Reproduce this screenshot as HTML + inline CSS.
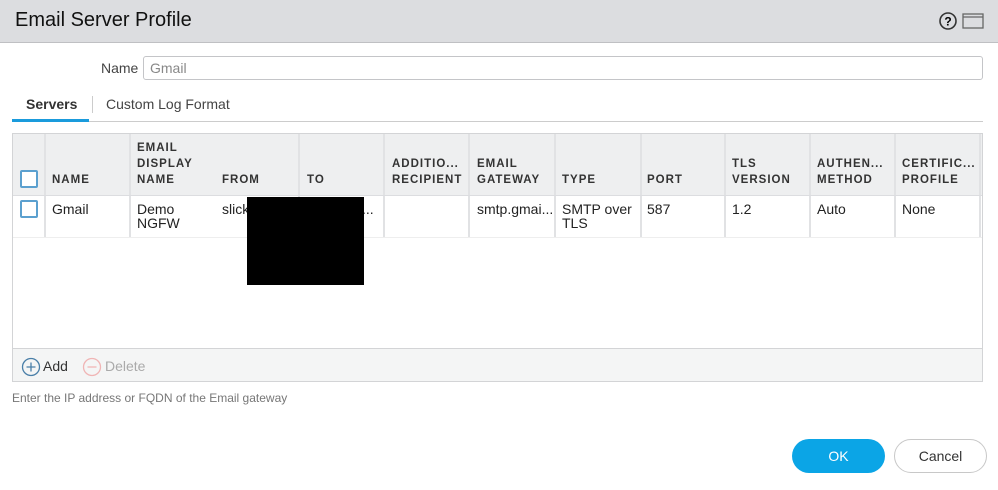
<!DOCTYPE html>
<html><head><style>
body{margin:0;width:998px;height:490px;background:#fff;font-family:"Liberation Sans",sans-serif;position:relative;overflow:hidden;color:#222}
.a{position:absolute;white-space:nowrap}
.hd{font-size:11.5px;font-weight:bold;letter-spacing:1px;color:#333;line-height:16px}
.cell{font-size:14px;line-height:14px;color:#222}
.vl{position:absolute;width:2px;background:#e1e2e4}
.cb{position:absolute;width:14px;height:14px;border:2px solid #5ba0cf;border-radius:2px;background:#fff}
</style></head><body>
<div class="a" style="left:0;top:0;width:998px;height:42px;background:#dcdde0;border-bottom:1px solid #bfc0c3"></div>
<div class="a" style="left:15px;top:9px;font-size:20px;color:#111">Email Server Profile</div>
<svg class="a" style="left:939px;top:11px" width="46" height="20" viewBox="0 0 46 20"><circle cx="9" cy="10" r="8" fill="none" stroke="#333" stroke-width="1.6"/><text x="9" y="14.5" font-size="12" font-weight="bold" text-anchor="middle" font-family="Liberation Sans">?</text><rect x="24" y="3" width="20" height="14" fill="none" stroke="#666" stroke-width="1.3"/><line x1="24" y1="6" x2="44" y2="6" stroke="#666" stroke-width="1.3"/></svg>
<div class="a" style="left:101px;top:60px;font-size:14px;color:#444">Name</div>
<div class="a" style="left:143px;top:56px;width:838px;height:22px;border:1px solid #c4c5c8;border-radius:3px"></div>
<div class="a" style="left:150px;top:60px;font-size:14px;color:#888">Gmail</div>
<div class="a" style="left:26px;top:96px;font-size:14px;font-weight:bold;color:#333">Servers</div>
<div class="a" style="left:92px;top:96px;width:1px;height:17px;background:#ccc"></div>
<div class="a" style="left:106px;top:96px;font-size:14px;color:#444">Custom Log Format</div>
<div class="a" style="left:12px;top:121px;width:971px;height:1px;background:#ccc"></div>
<div class="a" style="left:12px;top:119px;width:77px;height:3px;background:#1a9bdc"></div>
<div class="a" style="left:12px;top:133px;width:969px;height:247px;border:1px solid #d3d4d6"></div>
<div class="a" style="left:13px;top:134px;width:969px;height:61px;background:#eeeff0"></div>
<div class="a" style="left:13px;top:348px;width:969px;height:32px;background:#f4f5f5;border-top:1px solid #d3d4d6"></div>
<div class="vl" style="left:44px;top:134px;height:103px"></div>
<div class="vl" style="left:129px;top:134px;height:103px"></div>
<div class="vl" style="left:298px;top:134px;height:103px"></div>
<div class="vl" style="left:383px;top:134px;height:103px"></div>
<div class="vl" style="left:468px;top:134px;height:103px"></div>
<div class="vl" style="left:554px;top:134px;height:103px"></div>
<div class="vl" style="left:640px;top:134px;height:103px"></div>
<div class="vl" style="left:724px;top:134px;height:103px"></div>
<div class="vl" style="left:809px;top:134px;height:103px"></div>
<div class="vl" style="left:894px;top:134px;height:103px"></div>
<div class="vl" style="left:979px;top:134px;height:103px"></div>
<div class="a" style="left:13px;top:195px;width:969px;height:1px;background:#dcdde0"></div>
<div class="a" style="left:13px;top:237px;width:969px;height:1px;background:#eee"></div>
<div class="cb" style="left:20px;top:170px"></div>
<div class="cb" style="left:20px;top:200px"></div>
<div class="a hd" style="left:52px;top:172px">NAME</div>
<div class="a hd" style="left:137px;top:140px">EMAIL<br>DISPLAY<br>NAME</div>
<div class="a hd" style="left:222px;top:172px">FROM</div>
<div class="a hd" style="left:307px;top:172px">TO</div>
<div class="a hd" style="left:392px;top:156px">ADDITIO...<br>RECIPIENT</div>
<div class="a hd" style="left:477px;top:156px">EMAIL<br>GATEWAY</div>
<div class="a hd" style="left:562px;top:172px">TYPE</div>
<div class="a hd" style="left:647px;top:172px">PORT</div>
<div class="a hd" style="left:732px;top:156px">TLS<br>VERSION</div>
<div class="a hd" style="left:817px;top:156px">AUTHEN...<br>METHOD</div>
<div class="a hd" style="left:902px;top:156px">CERTIFIC...<br>PROFILE</div>
<div class="a cell" style="left:52px;top:202px">Gmail</div>
<div class="a cell" style="left:137px;top:202px">Demo<br>NGFW</div>
<div class="a cell" style="left:222px;top:202px">slick</div>
<div class="a cell" style="left:362px;top:202px">...</div>
<div class="a cell" style="left:477px;top:202px">smtp.gmai...</div>
<div class="a cell" style="left:562px;top:202px">SMTP over<br>TLS</div>
<div class="a cell" style="left:647px;top:202px">587</div>
<div class="a cell" style="left:732px;top:202px">1.2</div>
<div class="a cell" style="left:817px;top:202px">Auto</div>
<div class="a cell" style="left:902px;top:202px">None</div>
<div class="a" style="left:247px;top:197px;width:117px;height:88px;background:#000"></div>
<svg class="a" style="left:21px;top:357px" width="20" height="20"><circle cx="10" cy="10" r="8.5" fill="none" stroke="#4a7fa8" stroke-width="1.3"/><path d="M10 5.5v9M5.5 10h9" stroke="#4a7fa8" stroke-width="1.3"/></svg>
<div class="a" style="left:43px;top:358px;font-size:14px;color:#333">Add</div>
<svg class="a" style="left:82px;top:357px" width="20" height="20"><circle cx="10" cy="10" r="8.5" fill="none" stroke="#f0b5b5" stroke-width="1.3"/><path d="M5.5 10h9" stroke="#f0b5b5" stroke-width="1.3"/></svg>
<div class="a" style="left:105px;top:358px;font-size:14px;color:#aaa">Delete</div>
<div class="a" style="left:12px;top:391px;font-size:12px;color:#777">Enter the IP address or FQDN of the Email gateway</div>
<div class="a" style="left:792px;top:439px;width:93px;height:34px;border-radius:17px;background:#0ba5e6;color:#fff;font-size:14px;line-height:34px;text-align:center">OK</div>
<div class="a" style="left:894px;top:439px;width:91px;height:32px;border-radius:17px;border:1px solid #c8c8c8;color:#333;font-size:14px;line-height:32px;text-align:center">Cancel</div>
</body></html>
